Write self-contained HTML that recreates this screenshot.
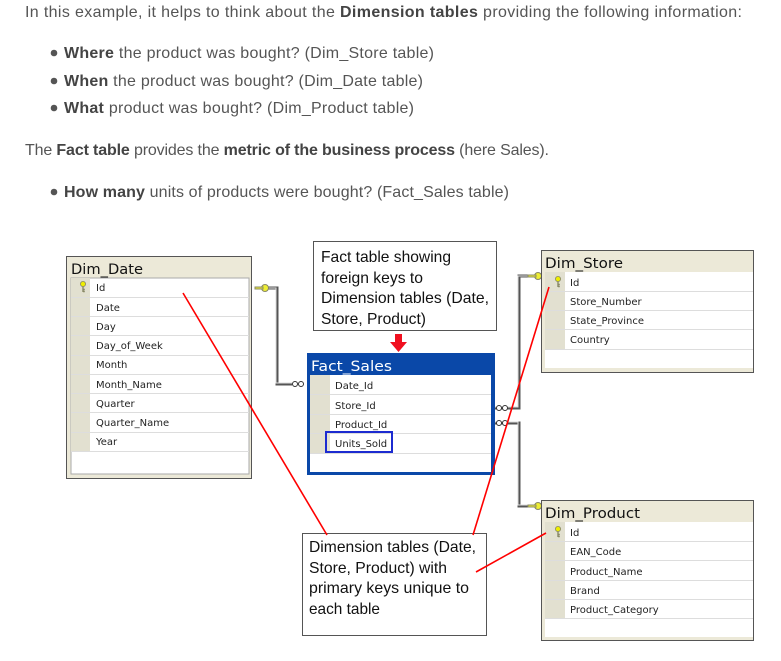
<!DOCTYPE html>
<html><head><meta charset="utf-8"><style>
html,body{margin:0;padding:0;background:#fff;width:781px;height:661px;overflow:hidden}
svg{display:block}
.t{font-family:"Liberation Sans",sans-serif;font-size:16px;fill:#555}
.b{font-weight:bold;fill:#444}
.h{font-family:"DejaVu Sans",sans-serif;font-size:14.5px;fill:#111}
.r{font-family:"DejaVu Sans",sans-serif;font-size:10px;fill:#222}
.c{font-family:"Liberation Sans",sans-serif;font-size:16px;fill:#111}
</style></head><body>
<svg width="781" height="661" viewBox="0 0 781 661" xmlns="http://www.w3.org/2000/svg">
<defs>
<g id="key"><circle cx="0" cy="-3" r="2.6" fill="#ee0" stroke="#886" stroke-width="0.8"/><path d="M0 -0.5 V5 M0 2.5 H1.8 M0 4.5 H1.8" stroke="#886" stroke-width="1.4" fill="none"/></g>
</defs>
<text class="t" x="25" y="17" textLength="717" lengthAdjust="spacing">In this example, it helps to think about the <tspan class="b">Dimension tables</tspan> providing the following information:</text>
<circle cx="54" cy="53" r="3.3" fill="#555"/><circle cx="54" cy="81" r="3.3" fill="#555"/><circle cx="54" cy="108" r="3.3" fill="#555"/><circle cx="54" cy="192" r="3.3" fill="#555"/>
<text class="t" x="64" y="58" textLength="370" lengthAdjust="spacing"><tspan class="b">Where</tspan> the product was bought? (Dim_Store table)</text>
<text class="t" x="64" y="86" textLength="359" lengthAdjust="spacing"><tspan class="b">When</tspan> the product was bought? (Dim_Date table)</text>
<text class="t" x="64" y="113" textLength="350" lengthAdjust="spacing"><tspan class="b">What</tspan> product was bought? (Dim_Product table)</text>
<text class="t" x="25" y="155" textLength="524" lengthAdjust="spacing">The <tspan class="b">Fact table</tspan> provides the <tspan class="b">metric of the business process</tspan> (here Sales).</text>
<text class="t" x="64" y="197" textLength="445" lengthAdjust="spacing"><tspan class="b">How many</tspan> units of products were bought? (Fact_Sales table)</text>

<!-- connectors -->
<g fill="none" stroke="#555" stroke-width="3">
<path d="M268 288 H277 V384 H292"/>
<path d="M495 408 H519 V276 H530"/>
<path d="M495 423 H519 V506 H530"/>
</g>
<g fill="none" stroke="#ddd" stroke-width="1">
<path d="M268 288 H276 V383 H292"/>
<path d="M495 407 H518 V276 H530"/>
<path d="M495 422 H518 V505 H530"/>
</g>
<g fill="#ee3" stroke="#886" stroke-width="1">
<circle cx="265" cy="288" r="3.5"/><rect x="255" y="287" width="8" height="2"/>
<circle cx="538" cy="276" r="3.5"/><rect x="528" y="275" width="8" height="2"/>
<circle cx="538" cy="506" r="3.5"/><rect x="528" y="505" width="8" height="2"/>
</g>
<g fill="#fff" stroke="#333" stroke-width="1">
<circle cx="295" cy="384" r="2.5"/><circle cx="301" cy="384" r="2.5"/>
<circle cx="499" cy="408" r="2.5"/><circle cx="505" cy="408" r="2.5"/>
<circle cx="499" cy="423" r="2.5"/><circle cx="505" cy="423" r="2.5"/>
</g>

<!-- Dim_Date -->
<rect x="66.5" y="256.5" width="185" height="222" fill="#ece9d8" stroke="#555"/>
<rect x="71" y="278" width="178" height="196" fill="#fff" stroke="#aaa"/>
<rect x="71" y="278" width="19" height="173" fill="#e2e0d0"/>
<text class="h" x="71" y="274" textLength="72" lengthAdjust="spacingAndGlyphs">Dim_Date</text>
<g stroke="#ddd"><path d="M71 297.5H249M71 316.5H249M71 335.5H249M71 355.5H249M71 374.5H249M71 393.5H249M71 412.5H249M71 432.5H249M71 451.5H249"/></g>
<g class="r"><text x="96" y="291">Id</text><text x="96" y="311">Date</text><text x="96" y="330">Day</text><text x="96" y="349">Day_of_Week</text><text x="96" y="368">Month</text><text x="96" y="388">Month_Name</text><text x="96" y="407">Quarter</text><text x="96" y="426">Quarter_Name</text><text x="96" y="445">Year</text></g>
<use href="#key" x="83" y="287"/>

<!-- Fact_Sales -->
<rect x="307" y="353" width="188" height="122" fill="#0a48a8"/>
<text x="311" y="371" font-family="DejaVu Sans" font-size="14.5" fill="#fff" textLength="81" lengthAdjust="spacingAndGlyphs">Fact_Sales</text>
<rect x="310" y="375" width="181" height="97" fill="#fff"/>
<rect x="310" y="375" width="20" height="78" fill="#e2e0d0"/>
<g stroke="#ddd"><path d="M310 394.5H491M310 414.5H491M310 433.5H491M310 453.5H491"/></g>
<g class="r"><text x="335" y="389">Date_Id</text><text x="335" y="409">Store_Id</text><text x="335" y="428">Product_Id</text><text x="335" y="447">Units_Sold</text></g>
<rect x="326" y="432" width="66" height="20" fill="none" stroke="#1c2bd0" stroke-width="2"/>

<!-- Dim_Store -->
<rect x="541.5" y="250.5" width="212" height="122" fill="#ece9d8" stroke="#555"/>
<text class="h" x="545" y="268" textLength="78" lengthAdjust="spacingAndGlyphs">Dim_Store</text>
<rect x="545" y="272" width="208" height="96" fill="#fff"/>
<rect x="545" y="272" width="20" height="77" fill="#e2e0d0"/>
<g stroke="#ddd"><path d="M545 291.5H753M545 310.5H753M545 329.5H753M545 349.5H753"/></g>
<g class="r"><text x="570" y="286">Id</text><text x="570" y="305">Store_Number</text><text x="570" y="324">State_Province</text><text x="570" y="343">Country</text></g>
<use href="#key" x="558" y="282"/>

<!-- Dim_Product -->
<rect x="541.5" y="500.5" width="212" height="140" fill="#ece9d8" stroke="#555"/>
<text class="h" x="545" y="518" textLength="95" lengthAdjust="spacingAndGlyphs">Dim_Product</text>
<rect x="545" y="522" width="208" height="115" fill="#fff"/>
<rect x="545" y="522" width="20" height="96" fill="#e2e0d0"/>
<g stroke="#ddd"><path d="M545 541.5H753M545 560.5H753M545 580.5H753M545 599.5H753M545 618.5H753"/></g>
<g class="r"><text x="570" y="536">Id</text><text x="570" y="555">EAN_Code</text><text x="570" y="575">Product_Name</text><text x="570" y="594">Brand</text><text x="570" y="613">Product_Category</text></g>
<use href="#key" x="558" y="532"/>

<!-- callouts -->
<rect x="313.5" y="241.5" width="183" height="89" fill="#fff" stroke="#555"/>
<g class="c"><text x="321" y="262" textLength="130" lengthAdjust="spacingAndGlyphs">Fact table showing</text><text x="321" y="283" textLength="102" lengthAdjust="spacingAndGlyphs">foreign keys to</text><text x="321" y="303" textLength="168" lengthAdjust="spacingAndGlyphs">Dimension tables (Date,</text><text x="321" y="324" textLength="105" lengthAdjust="spacingAndGlyphs">Store, Product)</text></g>
<path d="M395 334h7v8h5l-8.5 10l-8.5-10h5z" fill="#f01020"/>
<rect x="302.5" y="533.5" width="184" height="102" fill="#fff" stroke="#555"/>
<g class="c"><text x="309" y="552" textLength="167" lengthAdjust="spacingAndGlyphs">Dimension tables (Date,</text><text x="309" y="573" textLength="138" lengthAdjust="spacingAndGlyphs">Store, Product) with</text><text x="309" y="593" textLength="160" lengthAdjust="spacingAndGlyphs">primary keys unique to</text><text x="309" y="614" textLength="71" lengthAdjust="spacingAndGlyphs">each table</text></g>

<g stroke="#f00" stroke-width="1.6" fill="none">
<path d="M183 293 L327 535"/>
<path d="M549 287 L473 535"/>
<path d="M476 572 L546 533"/>
</g>
</svg>
</body></html>
